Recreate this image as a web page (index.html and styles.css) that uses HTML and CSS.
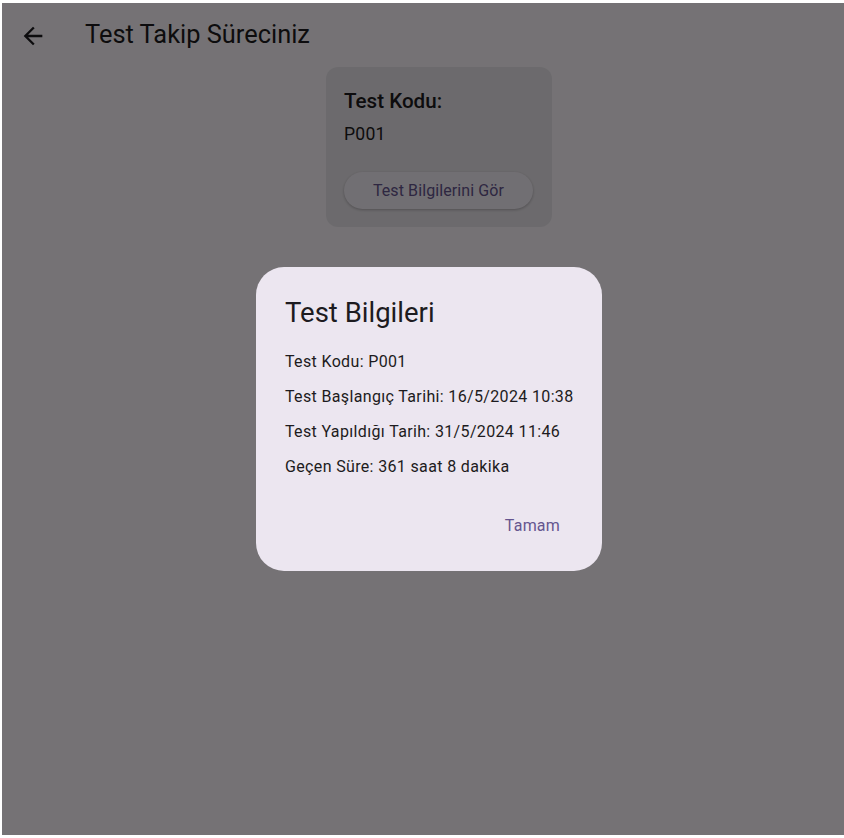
FILE: index.html
```html
<!DOCTYPE html>
<html lang="tr">
<head>
<meta charset="utf-8">
<title>Test Takip Süreciniz</title>
<link rel="stylesheet" href="styles.css">
</head>
<body>
<div class="screen">
  <header class="appbar">
    <button class="back" aria-label="Geri">
      <svg viewBox="0 0 24 24" width="28" height="28"><path d="M20 11H7.83l5.59-5.59L12 4l-8 8 8 8 1.41-1.41L7.83 13H20v-2z" fill="#1d1b20"/></svg>
    </button>
    <h1 class="title">Test Takip Süreciniz</h1>
  </header>
  <main class="content">
    <section class="card">
      <div class="card-label">Test Kodu:</div>
      <div class="card-value">P001</div>
      <button class="elevated">Test Bilgilerini Gör</button>
    </section>
  </main>
  <div class="scrim">
    <div class="dialog">
      <h2 class="dialog-title">Test Bilgileri</h2>
      <div class="dialog-body">
        <p>Test Kodu: P001</p>
        <p>Test Başlangıç Tarihi: 16/5/2024 10:38</p>
        <p>Test Yapıldığı Tarih: 31/5/2024 11:46</p>
        <p>Geçen Süre: 361 saat 8 dakika</p>
      </div>
      <div class="dialog-actions">
        <button class="text-btn">Tamam</button>
      </div>
    </div>
  </div>
</div>
</body>
</html>
```

FILE: styles.css
```css
html, body {
  margin: 0;
  padding: 0;
  background: #ffffff;
}
body {
  font-family: Roboto, "Noto Sans", sans-serif;
  color: #1d1b20;
  overflow: hidden;
}
.screen {
  position: relative;
  margin: 3px 0 0 2px;
  height: 832px;
  background: #fef9fe;
  overflow: hidden;
}
.appbar {
  height: 62px;
  display: flex;
  align-items: center;
  padding-left: 14px;
}
.back {
  width: 34px;
  height: 34px;
  border: 0;
  background: none;
  padding: 0;
  margin-top: 3px;
  display: flex;
  align-items: center;
  justify-content: center;
}
.title {
  margin: 0 0 0 35px;
  font-size: 25.4px;
  font-weight: 400;
  line-height: 32px;
}
.content {
  display: flex;
  justify-content: center;
  padding-left: 32px;
  padding-top: 2px;
}
.card {
  width: 226px;
  box-sizing: border-box;
  padding: 21px 18px 18px 18px;
  background: #ece8ee;
  border-radius: 12px;
}
.card-label {
  font-size: 20.6px;
  font-weight: 500;
  line-height: 26px;
}
.card-value {
  font-size: 17.6px;
  line-height: 24px;
  margin-top: 8px;
  letter-spacing: 0.2px;
}
.elevated {
  display: block;
  margin-top: 26px;
  width: 189px;
  height: 37px;
  border: 0;
  border-radius: 19px;
  background: #f7f2fa;
  color: #65558f;
  font-family: Roboto, sans-serif;
  font-size: 16px;
  font-weight: 400;
  letter-spacing: 0.1px;
  box-shadow: 0 1px 3px rgba(0,0,0,0.25);
}
.scrim {
  position: absolute;
  inset: 0;
  background: rgba(0, 0, 0, 0.54);
  display: flex;
  align-items: center;
  justify-content: center;
  padding-left: 12px;
}
.dialog {
  width: 346px;
  height: 304px;
  box-sizing: border-box;
  background: #ece6f0;
  border-radius: 28px;
  padding: 28px 20px 0 29px;
  display: flex;
  flex-direction: column;
}
.dialog-title {
  margin: 0;
  font-size: 27.5px;
  font-weight: 400;
  line-height: 36px;
}
.dialog-body {
  margin-top: 20px;
}
.dialog-body p {
  margin: 0 0 13px 0;
  font-size: 16px;
  line-height: 22px;
  letter-spacing: 0.35px;
  white-space: nowrap;
}
.dialog-actions {
  display: flex;
  justify-content: flex-end;
  margin-top: 15px;
  margin-right: 10px;
}
.text-btn {
  border: 0;
  background: none;
  color: #65558f;
  font-family: Roboto, sans-serif;
  font-size: 16px;
  font-weight: 400;
  letter-spacing: 0.2px;
  line-height: 20px;
  padding: 10px 12px;
}
```
